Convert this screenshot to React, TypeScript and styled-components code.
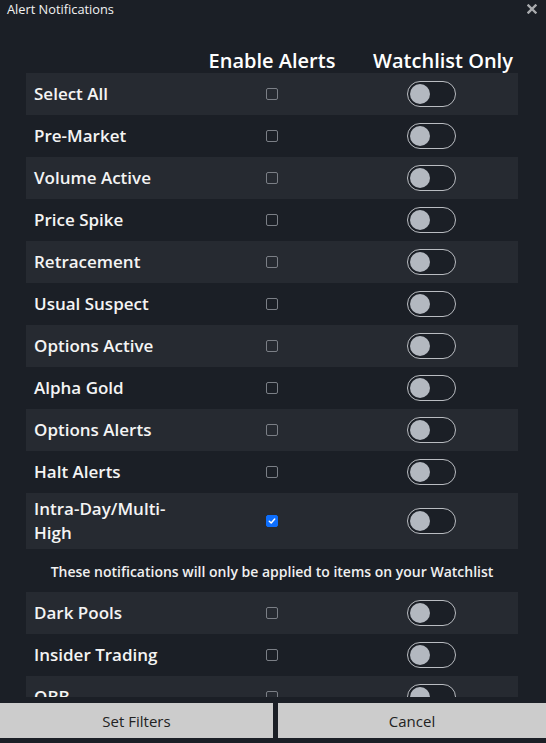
import React from "react";
import styled, { createGlobalStyle } from "styled-components";

const Global = createGlobalStyle`
  html, body { margin: 0; padding: 0; background: #1b1f26; }
  body { font-family: "Open Sans", "Noto Sans", sans-serif; }
  * { box-sizing: border-box; }
`;

const Dialog = styled.div`
  width: 546px;
  height: 743px;
  background: #1b1f26;
  display: flex;
  flex-direction: column;
  overflow: hidden;
`;

const TitleBar = styled.div`
  height: 18px;
  display: flex;
  align-items: center;
  justify-content: space-between;
  padding: 0 9px 0 7px;
  flex-shrink: 0;
`;

const Title = styled.span`
  color: #f2f2f2;
  font-size: 12.8px;
  line-height: 16px;
`;

const Close = styled.span`
  display: flex;
  align-items: center;
`;

const Body = styled.div`
  flex: 1;
  overflow: hidden;
  padding: 0 28px 0 26px;
`;

const Grid = styled.div`
  display: grid;
  grid-template-columns: 164px 164px 164px;
`;

const HeaderCell = styled.div<{ $shift?: number }>`
  height: 55px;
  display: flex;
  align-items: flex-end;
  justify-content: center;
  padding-left: ${(p) => p.$shift ?? 0}px;
  color: #ffffff;
  font-size: 20px;
  font-weight: 600;
  line-height: 25px;
  white-space: nowrap;
`;

const Row = styled.div<{ $alt: boolean }>`
  grid-column: 1 / -1;
  display: grid;
  grid-template-columns: subgrid;
  min-height: 42px;
  padding: 4px 0;
  align-items: center;
  background: ${(p) => (p.$alt ? "#262a31" : "transparent")};
`;

const Label = styled.div`
  padding-left: 8px;
  color: #f4f4f4;
  font-size: 17px;
  font-weight: 600;
  line-height: 24px;
`;

const CheckCell = styled.div`
  display: flex;
  justify-content: center;
  align-items: center;
`;

const Box = styled.span<{ $on: boolean }>`
  width: 12px;
  height: 12px;
  border-radius: 2px;
  border: 1px solid ${(p) => (p.$on ? "#0d6efd" : "#7b7f86")};
  background: ${(p) => (p.$on ? "#0d6efd" : "transparent")};
  display: flex;
  align-items: center;
  justify-content: center;
`;

const ToggleCell = styled.div`
  display: flex;
  justify-content: center;
  padding-right: 10px;
`;

const Track = styled.span`
  width: 49px;
  height: 26px;
  border-radius: 13px;
  border: 1.5px solid #b9bcc1;
  background: #1b1f26;
  display: flex;
  align-items: center;
  padding-left: 2px;
`;

const Knob = styled.span`
  width: 20px;
  height: 20px;
  border-radius: 50%;
  background: #b3b8c0;
`;

const Notice = styled.div`
  grid-column: 1 / -1;
  height: 43px;
  padding-top: 2px;
  display: flex;
  align-items: center;
  justify-content: center;
  color: #f0f0f0;
  font-size: 14px;
  font-weight: 600;
  white-space: nowrap;
`;

const Footer = styled.div`
  flex-shrink: 0;
  display: flex;
  gap: 5px;
  padding: 6px 0 5px;
`;

const Button = styled.button<{ $w?: number }>`
  flex: ${(p) => (p.$w ? `0 0 ${p.$w}px` : "1")};
  height: 35px;
  border: none;
  background: #cccccc;
  color: #222222;
  font-family: "Open Sans", sans-serif;
  font-size: 15px;
  padding: 0;
`;

const top = [
  "Select All",
  "Pre-Market",
  "Volume Active",
  "Price Spike",
  "Retracement",
  "Usual Suspect",
  "Options Active",
  "Alpha Gold",
  "Options Alerts",
  "Halt Alerts",
  "Intra-Day/Multi-High",
];
const bottom = ["Dark Pools", "Insider Trading", "OBB"];

function Item({ label, alt, on }: { label: string; alt: boolean; on?: boolean }) {
  return (
    <Row $alt={alt}>
      <Label>{label}</Label>
      <CheckCell>
        <Box $on={!!on}>
          {on && (
            <svg width="8" height="8" viewBox="0 0 8 8">
              <path d="M1.3 4.2 L3.2 6 L6.7 2" stroke="#fff" strokeWidth="1.5" fill="none" strokeLinecap="round" strokeLinejoin="round" />
            </svg>
          )}
        </Box>
      </CheckCell>
      <ToggleCell>
        <Track>
          <Knob />
        </Track>
      </ToggleCell>
    </Row>
  );
}

export default function App() {
  return (
    <>
      <Global />
      <Dialog>
        <TitleBar>
          <Title>Alert Notifications</Title>
          <Close>
            <svg width="10" height="10" viewBox="0 0 10 10">
              <path d="M1.5 1.5 L8.5 8.5 M8.5 1.5 L1.5 8.5" stroke="#a9abae" strokeWidth="2.4" strokeLinecap="square" />
            </svg>
          </Close>
        </TitleBar>
        <Body>
          <Grid>
            <HeaderCell />
            <HeaderCell>Enable Alerts</HeaderCell>
            <HeaderCell $shift={14}>Watchlist Only</HeaderCell>
            {top.map((l, i) => (
              <Item key={l} label={l} alt={i % 2 === 0} on={l.startsWith("Intra")} />
            ))}
            <Notice>These notifications will only be applied to items on your Watchlist</Notice>
            {bottom.map((l, i) => (
              <Item key={l} label={l} alt={i % 2 === 0} />
            ))}
          </Grid>
        </Body>
        <Footer>
          <Button $w={273}>Set Filters</Button>
          <Button>Cancel</Button>
        </Footer>
      </Dialog>
    </>
  );
}
